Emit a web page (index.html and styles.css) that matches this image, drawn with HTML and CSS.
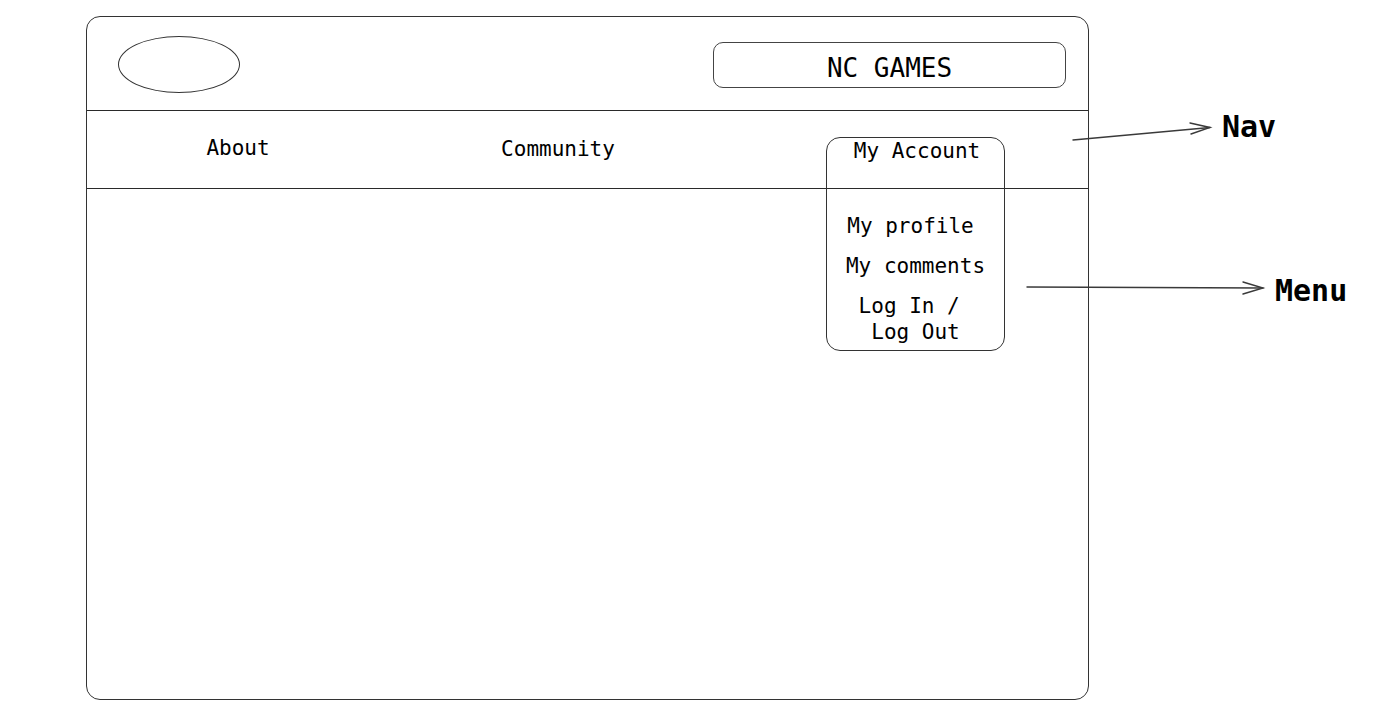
FILE: index.html
```html
<!DOCTYPE html>
<html lang="en">
  <head>
    <meta charset="utf-8" />
    <title>NC Games wireframe</title>
    <meta name="viewport" content="width=device-width, initial-scale=1" />
    <link rel="stylesheet" href="styles.css">
  </head>
  <body>
    <div class="board">
      <div class="frame">
        <header class="site-header">
          <div class="logo"></div>
          <div class="title-box">NC GAMES</div>
        </header>
        <nav class="site-nav">
          <span class="nav-item">About</span>
          <span class="nav-item">Community</span>
          <div class="account-menu">
            <span class="account-title">My Account</span>
            <ul class="menu-list">
              <li>My profile</li>
              <li>My comments</li>
              <li>Log In /&nbsp;<br />Log Out</li>
            </ul>
          </div>
        </nav>
        <main class="site-body"></main>
      </div>

      <!-- annotations -->
      <svg class="arrows" width="1376" height="728" viewBox="0 0 1376 728">
        <g fill="none" stroke="#3a3a3a" stroke-width="1.4" stroke-linecap="round">
          <path d="M1073 140 L1210 127.5" />
          <path d="M1190 123 L1210 127.5 L1191 134" />
          <path d="M1027 287 L1263 288" />
          <path d="M1243 282 L1263 288 L1243 294" />
        </g>
      </svg>
      <span class="note note-nav">Nav</span>
      <span class="note note-menu">Menu</span>
    </div>
  </body>
</html>
```

FILE: styles.css
```css
body {
  margin: 0;
  background: #fff;
  color: #000;
  font-family: 'DejaVu Sans Mono', 'Liberation Mono', monospace;
}
.board {
  position: relative;
  width: 1376px;
  height: 728px;
  overflow: hidden;
}
.frame {
  position: relative;
  margin: 16px 0 0 86px;
  width: 1003px;
  height: 684px;
  box-sizing: border-box;
  border: 1.5px solid #333;
  border-radius: 14px;
  display: flex;
  flex-direction: column;
}
.site-header {
  height: 94px;
  flex: none;
  box-sizing: border-box;
  border-bottom: 1.5px solid #2a2a2a;
  display: flex;
  justify-content: space-between;
  align-items: flex-start;
  padding: 19px 22px 0 31px;
}
.logo {
  width: 120px;
  height: 55px;
  border: 1.5px solid #333;
  border-radius: 50%;
}
.title-box {
  margin-top: 6px;
  width: 351px;
  height: 39px;
  padding-top: 5px;
  border: 1.5px solid #444;
  border-radius: 10px;
  display: flex;
  align-items: center;
  justify-content: center;
  font-size: 26px;
}
.site-nav {
  height: 78px;
  flex: none;
  box-sizing: border-box;
  border-bottom: 1.5px solid #2a2a2a;
  display: grid;
  grid-template-columns: 306px 330px 103px 179px;
  align-items: start;
  font-size: 21px;
}
.nav-item {
  text-align: center;
  margin-top: 25px;
}
.nav-item:first-child {
  margin-right: 4px;
}
.nav-item:nth-child(2) {
  margin-top: 26px;
}
.account-menu {
  grid-column: 4;
  margin-top: 26px;
  height: 214px;
  box-sizing: border-box;
  border: 1.5px solid #333;
  border-radius: 14px;
  text-align: center;
  display: flex;
  flex-direction: column;
}
.account-title {
  margin: 1px 0 0 3px;
  line-height: 24px;
}
.menu-list {
  list-style: none;
  margin: 50px 0 0;
  padding: 0;
  display: flex;
  flex-direction: column;
  gap: 14px;
  line-height: 26px;
}
.menu-list li:first-child {
  margin-right: 10px;
}
.site-body {
  flex: 1;
}
.arrows {
  position: absolute;
  left: 0;
  top: 0;
  pointer-events: none;
}
.note {
  position: absolute;
  font-size: 30px;
  font-weight: bold;
  line-height: 36px;
}
.note-nav {
  left: 1222px;
  top: 109px;
}
.note-menu {
  left: 1275px;
  top: 273px;
}
```
